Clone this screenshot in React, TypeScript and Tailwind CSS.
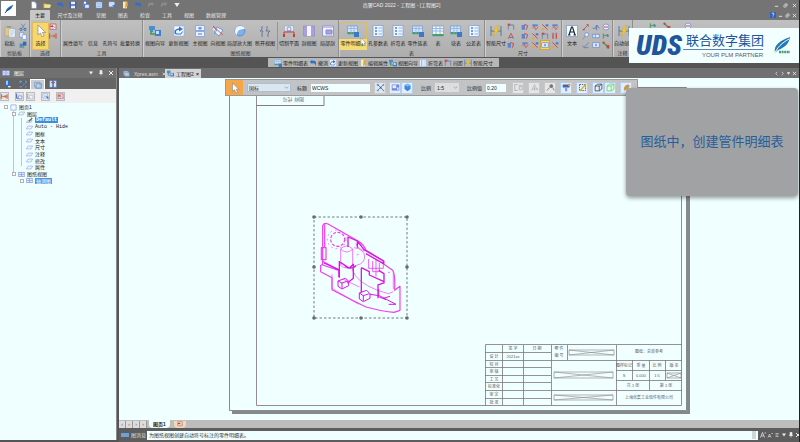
import React from "react";

type Draw = React.ReactNode;

/* Icons, all on a 12 x 12 grid */
const ICONS: Record<string, Draw> = {
  swoosh: (<><path d="M2 10C2 6 6 3 11 1C10 5 7 8 4 8Z" fill="#2a6fc0" /><path d="M1 11L8 4" stroke="#123f86" /></>),
  file: (<><path d="M2.5 1h5l2 2v8h-7z" fill="#fff" stroke="#8aa4d6" strokeWidth=".7" /><path d="M7.500 1v2h2" fill="none" stroke="#6b8bd0" /></>),
  open: (<><path d="M1 4h4l1 1h5v5H1z" fill="#e8cf6a" /><path d="M2 10l2-4h8l-2 4z" fill="#f4e596" /><path d="M6 3c1-2 3-2 4 0" stroke="#3c8f45" fill="none" /></>),
  save: (<><path d="M1 1h10v10H1z" fill="#3f62c4" /><path d="M3 1h6v4H3zM3 7h6v4H3z" fill="#eaf2ff" /></>),
  saveall: (<><path d="M1 1h7v7H1z" fill="#5b7fd4" /><path d="M3 1h3v3H3z" fill="#fff" /><path d="M4 5h7v6H4z" fill="#dce8ff" stroke="#3f62c4" /></>),
  sheet: (<><path d="M1.500 1.500h9v9h-9z" fill="#edf4ff" stroke="#5f8fd8" /><path d="M3 4h6M3 6h6M3 8h6" stroke="#5fa0e0" /></>),
  sheetgo: (<><path d="M1.500 1.500h8v7h-8z" fill="#fff" stroke="#7fa0d8" /><path d="M3 4h5M3 6h5" stroke="#8fb0e0" /><path d="M6 6h5v5z" fill="#3d7ad0" /></>),
  pen: (<><path d="M3 1h6v10H3z" fill="#f4e8c6" /><path d="M7 1h3v7L6 11z" fill="#e5a62c" /></>),
  undo: <path d="M1 4L5 1v2c4-1 7 1 5 7-1-3-2-4-5-4v2z" fill="#2f6fc9" />,
  redo: <path d="M11 4L7 1v2C3 2 0 4 2 10c1-3 2-4 5-4v2z" fill="#8b8b8b" />,
  paste: (<><path d="M1 2h8v9H1z" fill="#e3c883" stroke="#b5975a" strokeWidth=".5" /><path d="M3 1h4v2H3z" fill="#8f9bb0" /><path d="M5 4h6v8H5z" fill="#f4f9ff" stroke="#8aa4c8" strokeWidth=".5" /><path d="M6 6h4M6 8h4M6 10h3" stroke="#7ca0d0" strokeWidth=".6" /></>),
  cut: (<><path d="M3 1l5 7M9 1L4 8" stroke="#6785ab" strokeWidth="1.200" /><circle cx="3" cy="9.500" r="1.700" fill="none" stroke="#2f6ac0" strokeWidth="1.300" /><circle cx="9" cy="9.500" r="1.700" fill="none" stroke="#2f6ac0" strokeWidth="1.300" /></>),
  copy: (<><path d="M1 1h6v7H1z" fill="#edf4ff" stroke="#6a94d4" /><path d="M5 4h6v7H5z" fill="#fff" stroke="#6a94d4" /></>),
  brush: (<><path d="M1 4h6v6H1z" fill="#4a83d0" /><path d="M6 1h5v6H6z" fill="#3a64b8" /><path d="M4 7l4 4" stroke="#68b060" strokeWidth="2" /></>),
  cursor: <path d="M3 0v10l2.500-2 1.500 4 2-1-1.500-3.500H10.500z" fill="#fff" stroke="#6b7785" strokeWidth=".6" />,
  redsel: (<><path d="M1.500 1.500h9v8h-9z" fill="#f3d9dc" stroke="#bb4a52" /><path d="M5 4l6 5-4 1z" fill="#fff" stroke="#5c5c80" strokeWidth=".6" /><path d="M2 5h4" stroke="#cc3333" strokeWidth="2" /></>),
  redlink: (<><path d="M1 2v8M10.500 2v8" stroke="#d24848" strokeWidth="1.500" /><path d="M2 6h7" stroke="#e37b35" strokeWidth="2" /><path d="M6 4h4v4H6z" fill="#e36a4a" /></>),
  wizard: (<><path d="M0 1h6v4H0zM1 5h3v2H1z" fill="#4a90d0" /><path d="M2 6v3h4" stroke="#3f9a5a" strokeWidth="1.500" fill="none" /><path d="M6 5h6v6H6z" fill="#3f7fd0" /><path d="M7 6h3v3H7z" fill="#bfe0ff" /></>),
  refresh: (<><path d="M1 1h10v10H1z" fill="#f2f8ff" stroke="#8fb0e0" strokeWidth=".6" /><path d="M3 9C1 6 3 4 7 4" fill="none" stroke="#2f6fd0" strokeWidth="1.500" /><path d="M6 1.500L10 4 6 6.500z" fill="#2f6fd0" /><path d="M3 9h5l1.500-2.500" stroke="#2f6fd0" fill="none" /></>),
  mainview: (<><path d="M1.500 .5h9v5h-9zM1.500 6.500h9v5h-9z" fill="#e9f1ff" stroke="#7f9fda" strokeWidth=".8" /><path d="M4 3h4M6 2v3M4 9h4" stroke="#4f7fd0" /></>),
  dirview: (<><path d="M1 2l4 3-3 4M5 2l6 3-4 6-5-4z" fill="#e9f1ff" stroke="#5f86cc" strokeWidth=".8" /><path d="M1 1l10 9" stroke="#cc5544" strokeWidth=".9" /></>),
  detail: (<><circle cx="6" cy="6" r="5" fill="#7fb0ee" stroke="#4a7fd0" strokeWidth=".7" /><path d="M6 1a5 5 0 0 0-3 9c0-4 2-6 8-6a5 5 0 0 0-5-3z" fill="#eef6ff" /></>),
  brk: <path d="M3 1v3l-2 2h3l-1 2v4M8 1v3l-1 2h4l-2 2v4" stroke="#5f7392" fill="none" strokeWidth=".9" />,
  cutplane: (<><path d="M1.500 1h9v5h-9z" fill="#e9f1ff" stroke="#8f9fc8" strokeWidth=".6" /><circle cx="6" cy="4" r="2" fill="none" stroke="#5578bb" strokeWidth=".7" /><path d="M1 11V7h10v4" stroke="#cc3a3a" fill="none" /><path d="M0 9h2v3H0zM10 9h2v3h-2z" fill="#cc3a3a" /></>),
  section: (<><path d="M.5 1h11v10H.5z" fill="#aaa0dd" stroke="#8888c8" strokeWidth=".6" /><path d="M4 1h4v10H4z" fill="#f3f6ff" /></>),
  local: (<><path d="M.5 1h11v10H.5z" fill="#f0f3ff" stroke="#8888c8" strokeWidth=".8" /><path d="M1 1h10v2H1z" fill="#c4bfe8" /><path d="M4 5h6v4H4z" fill="#aaa0dd" stroke="#8888c8" /></>),
  bom: (<><path d="M.5 1h10v8H.5z" fill="#cfe4ff" stroke="#5f8fd0" strokeWidth=".6" /><path d="M.5 7h10v2H.5z" fill="#4aa060" /><path d="M.5 3.500h10M4 1v8M7 1v8" stroke="#86acd8" strokeWidth=".7" /><path d="M7 7h5v5H7z" fill="#3a78cc" /></>),
  table: (<><path d="M.5 1h11v10H.5z" fill="#edf6ff" stroke="#6f97d4" strokeWidth=".6" /><path d="M.5 9h11v2H.5z" fill="#4aa060" /><path d="M.5 3.500h11M.5 6h11M4 1v8M8 1v8" stroke="#86acd8" strokeWidth=".8" /></>),
  holes: (<><path d="M1 .5h10v11H1z" fill="#edf6ff" stroke="#7fa3dc" strokeWidth=".8" /><path d="M3 3h2M3 6h2M3 9h2" stroke="#4a80d0" strokeWidth="1.600" /><path d="M6.500 3H10M6.500 6H10M6.500 9H10" stroke="#8fb2e4" /></>),
  dim: (<><path d="M1 1v10M11 1v10M1 6h10" stroke="#44679c" strokeWidth=".8" /><path d="M8 0L3 6h2l-2 6 6-7H7l2-5z" fill="#f3c62c" stroke="#c59a1c" strokeWidth=".3" /></>),
  d1: (<><path d="M2 3h8M2 3v7M10 3v7" stroke="#567cb8" strokeWidth="1.200" fill="none" /><path d="M1 1h4v3H1z" fill="#d04848" /></>),
  d2: (<><path d="M2 10L6 2l4 8" stroke="#d04848" strokeWidth="1.300" fill="none" /><path d="M3 8h6" stroke="#3f70c0" strokeWidth="1.300" /></>),
  d3: (<><path d="M1 3h5v7H1z" fill="#5b86cc" /><path d="M5 2l5 2-2 6" stroke="#d04848" strokeWidth="1.500" fill="none" /></>),
  d4: (<><path d="M2 2h8v3H2z" fill="#5b86cc" /><path d="M2 8l3-3 2 5 4-4" stroke="#cf5548" strokeWidth="1.400" fill="none" /></>),
  d5: (<><path d="M2 2l8 8" stroke="#d04848" strokeWidth="1.500" /><path d="M7 2h4v3H7z" fill="#4877c4" /><path d="M1 8h4v3H1z" fill="#e8a63c" /></>),
  d6: (<><path d="M3 1v9M8 1v9" stroke="#d04848" strokeWidth="2" /><path d="M1 3h9" stroke="#8ba5cc" /></>),
  A: (<><path d="M.5 .5h11v11H.5z" fill="#f7fbff" stroke="#6f97d4" strokeWidth=".7" /><path d="M3 10l2.500-8h1L9 10M4 7h4M2 10h2.500M7.500 10H10" stroke="#1d2836" strokeWidth="1.200" fill="none" /></>),
  n1: (<><path d="M2 10l6-6" stroke="#4a70b8" strokeWidth="1.200" /><path d="M6 2h4v4z" fill="#cc4444" /><path d="M1 9h3v2H1z" fill="#cc4444" /></>),
  n2: <path d="M1 8h4l2-5 4 5M7 3v8" stroke="#4a70b8" strokeWidth="1.200" fill="none" />,
  n3: (<><circle cx="6" cy="6" r="4.500" fill="#e6efff" stroke="#5a80cc" /><path d="M3 6h6" stroke="#cc4444" strokeWidth="1.500" /></>),
  n4: (<><circle cx="7" cy="4" r="3" fill="#e6efff" stroke="#5a80cc" /><path d="M5 6l-4 5" stroke="#5a80cc" /></>),
  n5: (<><path d="M1 3.500h10v5H1z" fill="#dfeaff" stroke="#5a80cc" /><path d="M5 3v5" stroke="#5a80cc" /></>),
  n6: (<><path d="M2 2v8M2 6l7-2" stroke="#3f9a50" strokeWidth="1.400" /><path d="M7 4h3v3H7z" fill="#4877c4" /></>),
  n7: <path d="M1 7l2 3 7-8M3 10h7" stroke="#5a7cb4" strokeWidth="1.100" fill="none" />,
  n8: (<><path d="M1 2.500h10v7H1z" fill="#eef4ff" stroke="#5a80cc" /><path d="M4 6h4M6 4v4" stroke="#44679c" /></>),
  n9: (<><path d="M1 2l5 4 4 5" stroke="#3f9a50" strokeWidth="2" fill="none" /><path d="M7 6h4v5H7z" fill="#cc4444" /><path d="M1 1h3v3H1z" fill="#cc4444" /></>),
  scatter: (<><path d="M1 1h3v3H1zM5 5h3v3H5zM9 1h2v3H9zM1 9h3v2H1zM9 9h2v2H9z" fill="#78b2ff" /><path d="M2 2l8 8M10 2L2 10" stroke="#234f8c" strokeWidth=".8" /></>),
  book: (<><path d="M3 1h6v10H3z" fill="#2b6fd4" /><path d="M3 1h3v6H3z" fill="#9cc9ff" /><path d="M6 9h4v2H6z" fill="#f0f3a0" /></>),
  layers: (<><path d="M1 2h8v7H1z" fill="#d4e7ff" stroke="#5a88d0" /><path d="M3 4h8v7H3z" fill="#9ec4f8" stroke="#5a88d0" /><circle cx="6" cy="7" r="2" fill="#e7cf7c" /></>),
  swap: (<><path d="M1 1h4v10H1zM7 1h4v10H7z" fill="#eaf3ff" stroke="#4f80cc" /><path d="M3 4h6" stroke="#cc4444" strokeWidth="1.500" /></>),
  layer: <path d="M3.500 3.500h8l-3 5h-8z" fill="#eef4ff" stroke="#7f95d2" strokeWidth=".9" />,
  layerpen: (<><path d="M3.500 5.500h7l-2 4h-8z" fill="#eef4ff" stroke="#7f95d2" strokeWidth=".9" /><path d="M4 7l6-6 1.500 1.500-6 6z" fill="#7a633e" /></>),
  page: <path d="M1.500 1.500h9v9h-9z" fill="#f4f9ff" stroke="#7f95d2" strokeWidth="1.100" />,
  views: (<><path d="M.5 2.500h11v7H.5z" fill="#dfe8ff" stroke="#6a83cc" /><path d="M6 3v6M2 6h3M7 6h3" stroke="#6a83cc" /></>),
  arrowbk: (<><path d="M1 1v8h6" fill="none" stroke="#3b5bb0" strokeWidth="1.500" /><path d="M4 5h6v5H4z" fill="#f4f7ff" stroke="#4a6cc0" /></>),
  arrowgr: (<><path d="M1 1v8h6" fill="none" stroke="#a4a8ae" strokeWidth="1.500" /><path d="M4 4h6v6H4z" fill="#f4f4f4" stroke="#b0b4ba" /></>),
  cube: <path d="M1.500 4L5 1.500h5.500V8L7 10.500H1.500zM1.500 4H7v6.500M7 4l3.500-2.500" fill="none" stroke="#333e4a" />,
  cubeg: <path d="M1.500 4L5 1.500h5.500V8L7 10.500H1.500zM1.500 4H7v6.500M7 4l3.500-2.500" fill="#e6ffe9" stroke="#55cc70" />,
  ball: (<><path d="M2 3l4-2 4 2v5l-4 3-4-3z" fill="#3a86e0" /><path d="M2 3l4 2 4-2-4-2z" fill="#7ab8ff" /></>),
  screen: (<><path d="M1 2h10v8H1z" fill="#6f86dc" /><path d="M2 3h5v4H2zM8 6h2v3H8z" fill="#e7eeff" /></>),
  magn: (<><circle cx="7" cy="4" r="2.500" fill="#777" /><path d="M5 6l-4 4M9 6l2 4" stroke="#888" strokeWidth="1.300" /></>),
  ghost: <path d="M1 2h4M1 10h4M1 2v8M7 3h4v6H7zM8 5h2" stroke="#a7a9ad" fill="none" />,
  ghost2: <path d="M2 10L6 2l4 8M3 8h8M6 5v5" stroke="#b0b2b6" fill="none" />,
  board: (<><path d="M1 2h9v4H1z" fill="#3f66ad" /><path d="M4 6h3v5H4z" fill="#7fa3dc" /><path d="M8 1h3v3H8z" fill="#e0934a" /></>),
  sketch: (<><path d="M2 2v8h8M2 2h8v8" stroke="#3e4c60" fill="none" strokeDasharray="2 1" /><path d="M3 10l8-9" stroke="#d0b830" strokeWidth="1.800" /></>),
  hand: <path d="M3 10c-2-5 3-9 6-8 3 3-1 5-2 6z" fill="#c99a55" />,
  help: (<><path d="M0 0h12v12H0z" fill="#2f62b8" /><path d="M4 4c0-3 4.500-2.500 4 0 0 1.500-2 1.500-2 3.500M6 9v1.500" stroke="#fff" fill="none" strokeWidth="1.500" /></>),
  wclose: <path d="M2 2l8 8M10 2l-8 8" stroke="#eee" strokeWidth="2" />,
  wmin: <path d="M2 8h8" stroke="#eee" strokeWidth="2" />,
  wmax: <path d="M2 5h5v5H2zM5 5V2h5v5H7" stroke="#e6e6e6" fill="none" strokeWidth="1.500" />,
  pin: <path d="M4 1h4v6H4zM2 7h8M6 7v4" stroke="#eee" fill="#eee" strokeWidth="1.300" />,
  down: <path d="M2 3h8L6 9z" fill="#eee" />,
  chev: <path d="M2 4l4 4 4-4" stroke="#6d7884" strokeWidth="1.300" fill="none" />,
  left: <path d="M8 2L4 6l4 4" stroke="#e6e6e6" fill="none" strokeWidth="1.800" />,
  right: <path d="M4 2l4 4-4 4" stroke="#e6e6e6" fill="none" strokeWidth="1.800" />,
  fontbig: <path d="M1 11L5 1l4 10M3 8h4M9 2h3" stroke="#eee" fill="none" strokeWidth="1.500" />,
  fontsmall: <path d="M2 11l3-7 3 7M3 9h4M9 3h3" stroke="#ddd" fill="none" strokeWidth="1.300" />,
  lines: <path d="M3 3h6M3 6h6M3 9h6" stroke="#ccc" strokeWidth="1.500" />,
};

function Icon({ n, c = "size-2" }: { n: string; c?: string }) {
  return <svg viewBox="0 0 12 12" aria-hidden="true" className={`${c} block shrink-0`}>{ICONS[n]}</svg>;
}

function Tool({ n, label, w, state = "" }: { n?: string; label: string; w: string; state?: "" | "pressed" | "hover" }) {
  return (
    <button className={`${w} relative flex h-[28px] shrink-0 flex-col items-center whitespace-nowrap rounded-[1px] ${state === "pressed" ? "bg-[#f6d768]" : ""} ${state ? "ring-1 ring-inset ring-[#d9bb66]" : ""}`}>
      <span className="flex h-[17px] items-center pt-px">{n && <Icon n={n} c="size-3" />}</span>
      <span className={`w-full grow leading-2 ${state === "hover" ? "bg-[#f4dc78]" : ""}`}><span className="flex justify-center">{label}</span></span>
      {state === "hover" && <span className="absolute right-0 bottom-1"><Icon n="cursor" c="size-2" /></span>}
    </button>
  );
}

function MiniGrid({ names, cols, marked = -1 }: { names: string[]; cols: string; marked?: number }) {
  return (
    <div className={`grid ${cols} shrink-0 gap-x-0.5 gap-y-px pt-px`}>
      {names.map((n, i) => (
        <button key={i} aria-label={n} className={`flex size-2 items-center justify-center ${i === marked ? "bg-[#f6d768] ring-1 ring-[#cfa63c]" : ""}`}>
          <Icon n={n} c="size-2" />
        </button>
      ))}
    </div>
  );
}

function Group({ title, w, children }: { title: string; w: string; children: React.ReactNode }) {
  return (
    <section className={`${w} flex flex-col overflow-hidden border-r border-[#8e8e8e] shadow-[inset_1px_0_#cecece]`}>
      <div className="flex h-[30px] items-start pt-0.5">{children}</div>
      <div className="whitespace-nowrap text-center leading-[7px] text-[#333]">{title}</div>
    </section>
  );
}

function Ribbon() {
  return (
    <div className="flex h-[37px] shrink-0 bg-linear-to-b from-[#c0c0c0] to-[#adadad]">
      <Group title="剪贴板" w="w-[30px]">
        <Tool n="paste" label="粘贴" w="w-[19px]" />
        <MiniGrid names={["cut", "copy", "brush"]} cols="grid-cols-1" />
      </Group>
      <Group title="选择" w="w-[31px]">
        <div className="w-0.5 shrink-0" />
        <Tool n="cursor" label="选择" w="w-[17px]" state="pressed" />
        <MiniGrid names={["redsel", "redlink"]} cols="grid-cols-1" />
      </Group>
      <Group title="工具" w="w-[82px]">
        <Tool label="属性填写" w="w-[24px]" />
        <Tool label="信息" w="w-[16px]" />
        <Tool label="孔符号" w="w-[18px]" />
        <Tool label="批量转换" w="w-[22px]" />
      </Group>
      <Group title="图纸视图" w="w-[196px]">
        <Tool n="wizard" label="视图向导" w="w-[24px]" />
        <Tool n="refresh" label="更新视图" w="w-[23px]" />
        <Tool n="mainview" label="主视图" w="w-[20px]" />
        <Tool n="dirview" label="向视图" w="w-[16px]" />
        <Tool n="detail" label="局部放大图" w="w-[27px]" />
        <Tool n="brk" label="断开视图" w="w-[24px]" />
        <div className="h-7 w-px shrink-0 bg-[#959595]" />
        <Tool n="cutplane" label="切割平面" w="w-[22px]" />
        <Tool n="section" label="剖视图" w="w-[18px]" />
        <Tool n="local" label="局部剖" w="w-[19px]" />
      </Group>
      <Group title="表" w="w-[146px]">
        <Tool n="bom" label="零件明细表" w="w-[28px]" state="hover" />
        <Tool n="holes" label="孔参数表" w="w-[22px]" />
        <Tool n="holes" label="折弯表" w="w-[18px]" />
        <Tool n="bom" label="零件族表" w="w-[21px]" />
        <Tool n="table" label="表" w="w-[20px]" />
        <Tool n="bom" label="块表" w="w-[16px]" />
        <Tool n="holes" label="公差表" w="w-[19px]" />
      </Group>
      <Group title="尺寸" w="w-[77px]">
        <Tool n="dim" label="智能尺寸" w="w-[22px]" />
        <MiniGrid names={["d1", "d2", "d3"]} cols="grid-cols-1" />
        <div className="w-1.5 shrink-0" />
        <MiniGrid names={["d3", "d4", "d5", "d4", "d3", "d5", "d1", "d6", "d4", "d5", "n8", "d5"]} cols="grid-cols-4" marked={10} />
      </Group>
      <Group title="" w="w-[51px]">
        <Tool n="A" label="文本" w="w-[20px]" />
        <MiniGrid names={["n1", "n2", "n3", "n4", "n5", "n6", "n7", "n8", "n9"]} cols="grid-cols-3" />
      </Group>
      <Group title="注释" w="w-[20px]">
        <Tool n="dim" label="自动创建" w="w-[22px]" />
      </Group>
      <div className="flex gap-1.5 pt-0.5 pl-4"><Icon n="n6" /><Icon n="n9" /><span className="w-px" /><Icon n="n3" /></div>
    </div>
  );
}

function Brand() {
  return (
    <div className="absolute right-0 top-7 flex h-[35px] w-[170px] items-center bg-[#f3ffff] pl-[7px] text-[#20549b]">
      <strong className="w-[47px] whitespace-nowrap font-['Liberation_Sans_Narrow','Roboto_Condensed','Open_Sans_Condensed','Liberation_Sans',sans-serif] text-[28px] font-black leading-8 italic">UDS</strong>
      <div className="w-[80px]">
        <div className="whitespace-nowrap border-b border-[#5a83b7] pl-[3px] text-[13px] leading-[17px]">联合数字集团</div>
        <div className="whitespace-nowrap pt-px text-right text-[6px] leading-2 text-[#55555c]">YOUR PLM PARTNER</div>
      </div>
      <svg viewBox="0 0 20 20" className="ml-2.5 size-5" aria-hidden="true">
        <path d="M2 17C0 9 8 4 17 1C16 8 11 12 5 14Z" fill="#2478b8" />
        <path d="M1 19C4 11 9 7 16 3M4 17C8 15 13 12 17 6" fill="none" stroke="#f3ffff" strokeWidth="1" />
        <path d="M6 16h11" stroke="#39a374" strokeWidth="2.500" strokeDasharray="2 .6" />
      </svg>
    </div>
  );
}

const LAYERS = ["图框", "文本", "尺寸", "注释", "修改", "属性"];

function Sidebar() {
  return (
    <aside className="mb-0.5 flex w-[117px] shrink-0 flex-col border-r border-[#8b8b8b] bg-[#666]">
      <div className="flex h-2.5 items-center gap-1 bg-[#707070] px-0.5 text-white">
        <Icon n="views" /><span className="grow">图层</span>
        <Icon n="down" c="size-1.5" /><Icon n="pin" c="size-1.5" /><Icon n="wclose" c="size-1.5" />
      </div>
      <div className="flex h-[11px] items-end bg-[#656565]">
        {["book", "scatter", "layers", "swap"].map((n) => (
          <button key={n} aria-label={n} className={`flex h-2.5 w-[15px] items-center justify-center ${n === "layers" ? "border-x border-t border-white bg-[#c9cdd0]" : ""}`}><Icon n={n} /></button>
        ))}
      </div>
      <div className="flex h-[14px] items-center gap-0.5 bg-[#f0f0f1]">
        {["redlink", "arrowbk", "arrowgr", "sheetgo", "redsel"].map((n, i) => (
          <button key={n} aria-label={n} className={`flex size-[9px] items-center justify-center border border-[#b8bbc0] bg-[#e4e5e8] ${i === 1 ? "" : "mr-1"}`}><Icon n={n} c="size-[7px]" /></button>
        ))}
      </div>
      <div className="relative grow bg-[#efffff] pt-px text-[#222]">
        <div className="absolute left-[13px] top-2 h-[61px] w-px bg-[#c9c4c4]" />
        <div className="absolute left-[21px] top-[15px] h-[48px] w-px bg-[#c9c4c4]" />
        <div className="relative flex h-20 flex-col justify-between">
          <TreeRow pad="pl-1" n="page" box="-">图页1</TreeRow>
          <TreeRow pad="pl-[12px]" n="layer" box="-">图层</TreeRow>
          <TreeRow pad="pl-[20px]" n="layerpen"><b className="bg-[#3b8ee0] px-px font-['Liberation_Mono'] text-white">Default</b></TreeRow>
          <TreeRow pad="pl-[20px]" n="layer"><span className="font-['Liberation_Mono']">Auto - Hide</span></TreeRow>
          {LAYERS.map((l) => <TreeRow key={l} pad="pl-[20px]" n="layer">{l}</TreeRow>)}
          <TreeRow pad="pl-[12px]" n="views" box="-">图纸视图</TreeRow>
          <TreeRow pad="pl-[20px]" n="views" box="+"><span className="bg-[#4b95e0] px-px text-white">轴测图</span></TreeRow>
        </div>
      </div>
    </aside>
  );
}

function TreeRow({ pad, n, box, children }: { pad: string; n: string; box?: string; children: React.ReactNode }) {
  return (
    <div className={`${pad} flex h-1.5 items-center gap-0.5 whitespace-nowrap`}>
      <span className={`flex h-1 w-1 items-center justify-center ${box ? "border border-[#b5b0b0] bg-white" : ""}`} />
      <Icon n={n} c="size-[7px]" />{children}
    </div>
  );
}

function Chip({ n, on }: { n: string; on?: boolean }) {
  return <button aria-label={n} className={`flex h-3 w-3 shrink-0 items-center justify-center border ${on ? "border-[#b3cdea] bg-[#e2eefa]" : "border-[#c8c8c8] bg-[#e6e6e6]"}`}><Icon n={n} c="size-[9px]" /></button>;
}

function ViewBar() {
  return (
    <div className="absolute left-[106px] top-px flex h-[17px] w-[413px] items-center whitespace-nowrap border border-[#9a9a9a] bg-[#c2c3c4] text-[#222]">
      <button aria-label="选择" className="flex h-[15px] w-[17px] shrink-0 items-center justify-center bg-[#f4a64a]"><Icon n="cursor" c="size-2.5" /></button>
      <div className="ml-1 flex h-[9px] w-11 shrink-0 items-center border border-[#a9c0d8] bg-[#dbe7ef]">
        <select aria-label="标准" className="w-full appearance-none bg-transparent pl-px outline-none"><option>国标</option></select><Icon n="chev" c="size-[5px] mr-px" />
      </div>
      <label htmlFor="title" className="ml-1.5">标题</label>
      <input id="title" defaultValue="WCWS" className="ml-1 h-2 w-[59px] shrink-0 bg-[#f2ffff] pl-px outline-none" />
      <div className="ml-1 flex gap-[3px]"><Chip n="scatter" /><span className="flex"><Chip n="screen" on /><Chip n="ball" on /></span></div>
      <label htmlFor="scale" className="ml-2">比例</label>
      <div className="ml-1 flex h-[9px] w-6 shrink-0 items-center bg-[#dedede]">
        <select id="scale" className="w-full appearance-none bg-transparent pl-0.5 outline-none"><option>1:5</option></select><Icon n="chev" c="size-[5px] mr-px" />
      </div>
      <label htmlFor="factor" className="ml-2">比例值</label>
      <input id="factor" defaultValue="0.20" className="ml-1 h-2 w-5 shrink-0 bg-[#f2ffff] pl-px outline-none" />
      <div className="ml-1.5 flex gap-1">
        <Chip n="ghost" /><Chip n="ghost2" /><Chip n="magn" /><Chip n="board" on /><Chip n="sketch" on />
        <span className="flex"><Chip n="cube" on /><Chip n="cubeg" on /></span><Chip n="hand" on />
      </div>
    </div>
  );
}

const ROWS = [345, 352, 360, 367, 375, 382, 390, 398, 405];
const ROLES = ["设 计", "校 对", "审 核", "工 艺", "标准化", "审 定", "批 准"];
const HANDLES: [number, number][] = [[314, 217], [361, 217], [407, 217], [314, 267], [407, 267], [314, 318], [361, 318], [407, 318]];

function Crossed({ x, y, w, h }: { x: number; y: number; w: number; h: number }) {
  return <path d={`M${x} ${y}h${w}v${h}h${-w}zl${w} ${h}M${x} ${y + h}l${w} ${-h}`} stroke="#8b8387" strokeWidth=".6" />;
}

function Drawing() {
  return (
    <svg viewBox="119 78 680 342" className="block h-[342px] w-[680px]" fill="none">
      <path d="M688.500 88V412.500H232" stroke="#858989" strokeWidth="3" />
      <path d="M229.500 87.500h457v323h-457z" stroke="#898b8b" fill="#f0ffff" />
      <path d="M256.500 95.500h425v310h-425z" stroke="#958c90" />
      <path d="M256 105.500h68V96" stroke="#8a7b80" />
      <text x="-304" y="-98" transform="rotate(180)" fontSize="5" fill="#6d6064">图样 代号</text>

      <g stroke="#7d757a" strokeWidth=".8">
        <path d="M485.500 405.500V344.500H682M502.500 345v60M523.500 345v60M551.500 345v60M567.500 345v15M616.500 345v60" />
        {ROWS.slice(1, -1).map((y) => <path key={y} d={`M485 ${y}.5H551`} />)}
        <path d="M551 360.500H682M551 390.500H682M616 370.500H682M616 380.500H682M632.500 360v20M649.500 360v30M665.500 360v20" />
      </g>
      <Crossed x={569} y={350} w={45} h={5} />
      <Crossed x={554} y={372} w={59} h={6} />
      <Crossed x={554} y={395} w={59} h={5} />
      <Crossed x={667} y={373} w={14} h={5} />
      <g fontSize="4" fill="#5f5a5f" textAnchor="middle">
        <text x="513" y="350">签 字</text><text x="537" y="350">日 期</text><text x="513" y="358">2021xx</text>
        {ROLES.map((r, i) => <text key={r} x="494" y={ROWS[i + 1] + 6}>{r}</text>)}
        <text x="559" y="350">零 件</text><text x="559" y="357">编 号</text>
        <text x="649" y="353">图纸：总装参考</text>
        <text x="624" y="367">图样标记</text><text x="641" y="367">重 量</text><text x="657" y="367">比 例</text><text x="674" y="367">版 本</text>
        <text x="624" y="377">S</text><text x="641" y="377">0.000</text><text x="657" y="377">1:5</text>
        <text x="633" y="387">共 1 张</text><text x="666" y="387">第 1 张</text>
        <text x="649" y="399">上海优集工业软件有限公司</text>
      </g>

      <g transform="translate(300 205) scale(.3333)" stroke="#f03cf5" strokeWidth="3.500" strokeLinejoin="round">
        <path d="M68 180V62q4-10 16-5L178 110q14 10 20 26l54 32v10l26 18q8 10 6 60l16-12v72l-18 6q-30-2-84-16-60-30-102-52v-36l-34-18v-18l8-6" />
        <path d="M74 58V128M64 128h14v36H64zM66 168L116 194 M68 180l48 16v20" />
        <circle cx="113" cy="103" r="21" strokeDasharray="9 5" />
        <circle cx="110" cy="103" r="28" strokeDasharray="5 9" strokeWidth="2" />
        <path d="M122 132q16-18 36 0v50q-18 14-36 0zM122 132q18 18 36 0" strokeWidth="2" />
        <path d="M162 128q32 4 32 28-2 20-22 24-20 6-14 16 10 34 74 60l34 10 14-6" strokeWidth="2" />
        <path d="M168 116q6 16 26 22" strokeWidth="2" />
        <path d="M206 162V190h44v-16M218 168v32h20v-26M228 165v50" strokeWidth="2.500" />
        <g stroke="#d818df" strokeWidth="4">
          <path d="M144 126V96L172 108V128M172 108l20 26 58 34v8l-52-30" />
          <path d="M118 168V218M118 170l30 20 12-12v42l-18 14M72 174l44 20M136 184q18 12 32-2" />
          <path d="M184 188V262M184 188l24 12v10l44 20M236 196l16 10v28l-18 6v40" />
          <path d="M210 268l28 4 50 26M236 252v24M250 280l20-6M266 298h22M238 276l20 8" strokeWidth="3" />
          <path d="M114 228l22-8 10 8v14l-20 10-12-8zM114 228l12 6v16M126 234l18-6" strokeWidth="3" />
          <path d="M178 264l22-8 10 10v14l-20 10-12-8zM178 264l12 8v16M190 272l18-6" strokeWidth="3" />
        </g>
        <path d="M128 222l50 24M264 202h6M170 149h6M280 200v52M96 208v42l80 48" strokeWidth="2" />
      </g>
      <path d="M314 217H407V318H314z" stroke="#777b7b" strokeDasharray="2.500 2" />
      {HANDLES.map(([x, y]) => <circle key={`${x}-${y}`} cx={x} cy={y} r="1.800" fill="#666b6b" />)}
    </svg>
  );
}

function Workspace() {
  return (
    <main className="flex min-w-0 grow flex-col">
      <div className="flex h-2.5 shrink-0 items-end bg-[#707070] text-[#ddd]">
        <button className="flex h-[9px] w-[46px] items-center gap-1 px-1"><Icon n="layers" c="size-[7px]" />Xpres.asm<Icon n="wclose" c="size-1 ml-auto" /></button>
        <button className="flex h-[9px] w-9 items-center gap-0.5 whitespace-nowrap bg-[#d3d3d3] px-0.5 text-[#222]"><Icon n="wizard" c="size-[7px]" />工程图2<span className="ml-auto font-bold">×</span></button>
        <div className="ml-auto flex items-center gap-px self-center pr-0.5"><Icon n="left" c="size-[5px]" /><Icon n="right" c="size-[5px]" /><Icon n="down" c="size-[5px]" /><Icon n="wclose" c="size-[5px]" /></div>
      </div>
      <div className="relative min-h-0 grow overflow-hidden bg-[#f0ffff]">
        <Drawing />
        <ViewBar />
      </div>
      <div className="flex h-2 shrink-0 items-center bg-[#bdbdbd] text-[#222]">
        {["first", "prev", "next", "last"].map((n, i) => (
          <button key={n} aria-label={n} className="flex h-[7px] w-[7px] items-center justify-center border-r border-[#999] bg-[#ddd] text-[#666]">{i < 2 ? "‹" : "›"}</button>
        ))}
        <button className="ml-0.5 h-2 rounded-b bg-[#f0ffff] px-1 font-bold leading-2">图页1</button>
        <button aria-label="新图页" className="ml-1 flex h-[7px] w-3 items-center justify-center rounded-b bg-[#f0dcae]"><Icon n="redsel" c="size-1.5" /></button>
      </div>
      <div className="flex h-3.5 shrink-0 items-center border-y-2 border-[#5d5d5d] bg-[#5d5d5d]">
        <div className="flex w-[28px] shrink-0 items-center gap-0.5 whitespace-nowrap pl-0.5 text-[#ddd]"><span className="h-1 w-2 bg-[#6f9fd8]" />图消息</div>
        <div className="flex h-[9px] grow items-center justify-between bg-[#efffff] px-0.5 text-[#333]">为图纸视图创建自动符号标注的零件明细表。<span className="h-2 w-1 bg-[#cfd6d6]" /></div>
        <div className="flex w-[41px] shrink-0 items-center gap-px pl-0.5">
          {["fontbig", "fontsmall", "lines", "down", "pin", "wclose"].map((n) => <Icon key={n} n={n} c="size-1.5" />)}
        </div>
      </div>
    </main>
  );
}

const QAT = ["file", "open", "undo", "save", "saveall", "sheet", "sheetgo", "pen", "undo", "redo", "redo", "down"];
const MENU: [string, string][] = [["主要", "w-5"], ["尺寸及注释", "w-10"], ["草图", "w-[22px]"], ["图表", "w-[22px]"], ["检查", "w-[22px]"], ["工具", "w-[22px]"], ["视图", "w-[22px]"], ["数据管理", "w-[32px]"]];
const QUICK: [string, string][] = [["bom", "零件明细表"], ["undo", "撤消"], ["refresh", "更新视图"], ["pen", "编辑属性"], ["wizard", "视图向导"], ["holes", "折弯表"], ["d1", "间距"], ["dim", "智能尺寸"]];

export default function App() {
  return (
    <div className="relative flex h-screen min-h-[442px] flex-col overflow-hidden border-r border-[#222] bg-[#555] font-['Liberation_Sans','Noto_Sans_CJK_SC',sans-serif] text-[5px] leading-[6px] text-[#1c1c1c]">
      <header className="flex h-5 shrink-0 bg-[#747474]">
        <div className="mt-px ml-px flex size-[15px] shrink-0 items-center justify-center bg-white"><Icon n="swoosh" c="size-2.5" /></div>
        <div className="flex grow flex-col">
          <div className="flex h-2.5 items-center text-[#f0f0f0]">
            <div className="flex flex-1 gap-[5px] pl-3.5">
              {QAT.map((n, i) => <button key={i} aria-label={n}><Icon n={n} /></button>)}
            </div>
            <div className="whitespace-nowrap pr-6">尚翼CAD 2022 - 工程图 - [工程图2]</div>
            <div className="flex flex-1 justify-end gap-1 pr-0.5"><Icon n="wmin" c="size-[5px]" /><Icon n="wmax" c="size-[5px]" /><Icon n="wclose" c="size-[5px]" /></div>
          </div>
          <nav className="flex h-2.5 items-center pl-3.5 text-[#e4e4e4]">
            {MENU.map(([m, w], i) => (
              <button key={m} className={`${w} h-2.5 whitespace-nowrap leading-2.5 ${i === 0 ? "rounded-t-[1px] bg-[#c8c8c8] text-[#111]" : ""}`}>{m}</button>
            ))}
            <div className="ml-auto flex items-center gap-0.5 pr-0.5"><Icon n="help" c="size-1.5" /><Icon n="wmin" c="size-[5px]" /><Icon n="wmax" c="size-[5px]" /><Icon n="wclose" c="size-[5px]" /></div>
          </nav>
        </div>
      </header>
      <Ribbon />
      <div className="flex h-[11px] shrink-0 items-center justify-center bg-[#545454] pr-8">
        <div className="flex h-[9px] items-center gap-px bg-[#b7b7b7] px-1.5">
          {QUICK.map(([n, t]) => <button key={t} className="flex items-center gap-px whitespace-nowrap"><Icon n={n} />{t}</button>)}
        </div>
      </div>
      <div className="flex min-h-0 grow">
        <Sidebar />
        <div className="w-0.5 shrink-0 bg-[#555]" />
        <Workspace />
      </div>
      <Brand />
      <div className="absolute right-px top-[88px] flex h-[108px] w-[172px] items-center justify-center rounded bg-[#a1a2a3] text-[13px] text-[#285d9d] shadow-[0_2px_4px_#0006]">图纸中，创建管件明细表</div>
    </div>
  );
}
